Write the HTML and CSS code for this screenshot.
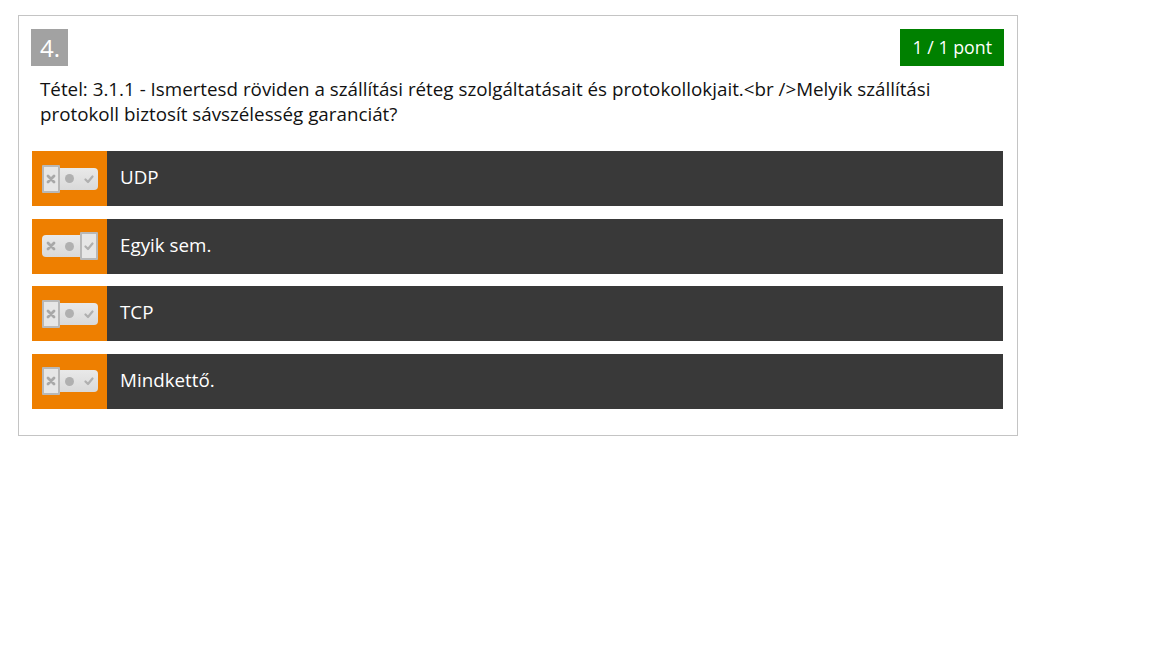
FILE: index.html
```html
<!DOCTYPE html>
<html lang="hu">
<head>
<meta charset="utf-8">
<title>Kérdés</title>
<link rel="stylesheet" href="styles.css">
</head>
<body>
<div class="question">
  <div class="q-head">
    <span class="q-num">4.</span>
    <span class="q-score">1 / 1 pont</span>
  </div>
  <div class="q-text">Tétel: 3.1.1 - Ismertesd röviden a szállítási réteg szolgáltatásait és protokollokjait.&lt;br /&gt;Melyik szállítási protokoll biztosít sávszélesség garanciát?</div>
  <div class="answers">
    <div class="answer">
      <div class="a-toggle">
        <div class="pill sel-no">
          <span class="seg no"><svg viewBox="0 0 10 10"><path d="M2 2L8 8M8 2L2 8"/></svg></span>
          <span class="seg mid"><i></i></span>
          <span class="seg yes"><svg viewBox="0 0 10 10"><path d="M1.5 5.5L4 8L8.5 2.5"/></svg></span>
        </div>
      </div>
      <div class="a-label">UDP</div>
    </div>
    <div class="answer">
      <div class="a-toggle">
        <div class="pill sel-yes">
          <span class="seg no"><svg viewBox="0 0 10 10"><path d="M2 2L8 8M8 2L2 8"/></svg></span>
          <span class="seg mid"><i></i></span>
          <span class="seg yes"><svg viewBox="0 0 10 10"><path d="M1.5 5.5L4 8L8.5 2.5"/></svg></span>
        </div>
      </div>
      <div class="a-label">Egyik sem.</div>
    </div>
    <div class="answer">
      <div class="a-toggle">
        <div class="pill sel-no">
          <span class="seg no"><svg viewBox="0 0 10 10"><path d="M2 2L8 8M8 2L2 8"/></svg></span>
          <span class="seg mid"><i></i></span>
          <span class="seg yes"><svg viewBox="0 0 10 10"><path d="M1.5 5.5L4 8L8.5 2.5"/></svg></span>
        </div>
      </div>
      <div class="a-label">TCP</div>
    </div>
    <div class="answer">
      <div class="a-toggle">
        <div class="pill sel-no">
          <span class="seg no"><svg viewBox="0 0 10 10"><path d="M2 2L8 8M8 2L2 8"/></svg></span>
          <span class="seg mid"><i></i></span>
          <span class="seg yes"><svg viewBox="0 0 10 10"><path d="M1.5 5.5L4 8L8.5 2.5"/></svg></span>
        </div>
      </div>
      <div class="a-label">Mindkettő.</div>
    </div>
  </div>
</div>
</body>
</html>
```
FILE: styles.css
```css
html, body { margin: 0; padding: 0; background: #fff; }
body { padding: 15px 0 0 18px; font-family: "Open Sans", "Noto Sans", sans-serif; color: #111; }

.question {
  width: 1000px;
  border: 1px solid #c4c4c4;
  padding: 13px 13px 26px 12px;
  box-sizing: border-box;
}
.q-head {
  display: flex;
  justify-content: space-between;
  align-items: flex-start;
}
.q-num {
  background: #a2a2a2;
  color: #fff;
  font-size: 24px;
  line-height: 37px;
  height: 37px;
  padding: 0 8px 0 9px;
}
.q-score {
  background: #008000;
  color: #fff;
  font-size: 17.8px;
  line-height: 37px;
  height: 37px;
  padding: 0 12px;
}
.q-text {
  font-size: 18.8px;
  line-height: 25px;
  padding: 11px 20px 0 9px;
  margin-bottom: 24px;
}
.answers {
  display: flex;
  flex-direction: column;
  gap: 12.67px;
  padding: 0 1px 0 1px;
}
.answer {
  display: flex;
  height: 55px;
  background: #393939;
}
.a-toggle {
  width: 75px;
  flex: none;
  background: #ee7f00;
  display: flex;
  align-items: center;
  justify-content: center;
}
.a-label {
  color: #fff;
  font-size: 18.8px;
  display: flex;
  align-items: center;
  padding: 0 0 3px 13px;
}
.pill {
  width: 56px;
  height: 22px;
  border-radius: 4px;
  background: linear-gradient(#e9e9e9, #d9d9d9);
  display: flex;
  align-items: center;
  position: relative;
}
.seg {
  width: 18px;
  height: 22px;
  display: flex;
  align-items: center;
  justify-content: center;
  box-sizing: border-box;
}
.seg.mid { width: 20px; }
.seg svg { width: 10px; height: 10px; fill: none; stroke-linecap: round; stroke-linejoin: round; }
.seg.no svg path { stroke: #a8a8a8; stroke-width: 2.8; }
.seg.yes svg path { stroke: #b0b0b0; stroke-width: 2.2; }
.seg.mid i { width: 9px; height: 9px; border-radius: 50%; background: #b0b0b0; display: block; }
.sel-no .seg.no,
.sel-yes .seg.yes {
  height: 28px;
  border: 2px solid #b8b8b8;
  background: #e6e6e6;
  border-radius: 1px;
}
```
